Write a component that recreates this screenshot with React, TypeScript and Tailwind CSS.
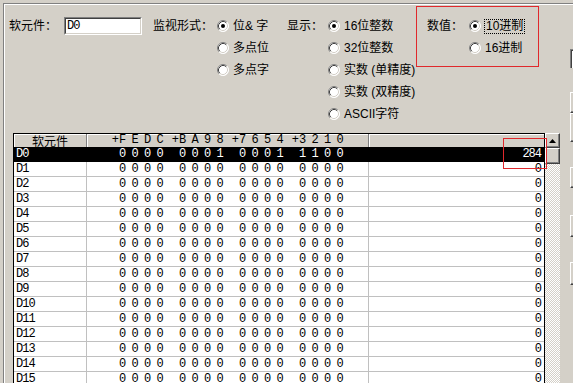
import React from "react"

const ui = 'font-["Liberation_Sans","Noto_Sans_CJK_SC",sans-serif] text-[12px] text-black'
const mono = 'font-["Liberation_Mono","Noto_Sans_CJK_SC",monospace] text-[12px] tracking-[-1px]'
const btn3d =
  "border border-t-white border-l-white border-r-[#404040] border-b-[#404040] bg-[#d4d0c8] shadow-[inset_-1px_-1px_0_#808080]"

function Radio({ checked }: { checked?: boolean }) {
  return (
    <svg width="12" height="12" viewBox="0 0 12 12" className="shrink-0">
      <circle cx="6" cy="6" r="5.5" fill="#fff" />
      <path d="M9.89 2.11 A5.5 5.5 0 0 0 2.11 9.89" stroke="#808080" fill="none" />
      <path d="M2.11 9.89 A5.5 5.5 0 0 0 9.89 2.11" stroke="#ffffff" fill="none" />
      <path d="M9.18 2.82 A4.5 4.5 0 0 0 2.82 9.18" stroke="#404040" fill="none" />
      <path d="M2.82 9.18 A4.5 4.5 0 0 0 9.18 2.82" stroke="#d4d0c8" fill="none" />
      {checked && <circle cx="6" cy="6" r="2" fill="#000" />}
    </svg>
  )
}

function Opt({ label, checked, focus }: { label: string; checked?: boolean; focus?: boolean }) {
  return (
    <div className="flex h-[22px] items-center">
      <Radio checked={checked} />
      {focus ? (
        <span className="ml-[3px] border border-dotted border-black pl-[1px] pr-[1px] leading-[13px]">{label}</span>
      ) : (
        <span className="ml-[4px] leading-[14px] whitespace-nowrap">{label}</span>
      )}
    </div>
  )
}

const rows = Array.from({ length: 16 }, (_, i) => ({
  name: `D${i}`,
  bits: i === 0 ? "0000000100011100" : "0000000000000000",
  value: i === 0 ? "284" : "0",
}))

const headGroups = [
  ["F", "E", "D", "C"],
  ["B", "A", "9", "8"],
  ["7", "6", "5", "4"],
  ["3", "2", "1", "0"],
]

function Bits({ bits }: { bits: string }) {
  return (
    <div className="flex pl-[32px]">
      {[0, 1, 2, 3].map((g) => (
        <div key={g} className="flex w-[60px]">
          {bits
            .slice(g * 4, g * 4 + 4)
            .split("")
            .map((b, k) => (
              <span key={k} className="w-[12.5px]">
                {b}
              </span>
            ))}
        </div>
      ))}
    </div>
  )
}

export default function App() {
  return (
    <div className={`relative h-[383px] w-[573px] overflow-hidden bg-[#d4d0c8] pl-[3px] pt-[3px] ${ui}`}>
      <div className="flex h-full border-l border-t border-[#808080] pl-[1px] pt-[1px] shadow-[inset_1px_1px_0_#fff]">
        {/* main column */}
        <div className="w-[565px] shrink-0">
          {/* controls */}
          <div className="flex h-[128px] items-start pt-[1px]">
            <div className="mt-[9px] ml-[4px] flex h-[22px] w-[55px] items-center">软元件：</div>
            <div className="mt-[11px] h-[18px] w-[78px] border border-t-[#808080] border-l-[#808080] border-r-white border-b-white">
              <div className={`h-full border border-t-[#404040] border-l-[#404040] border-r-[#d4d0c8] border-b-[#d4d0c8] bg-white pl-[1px] leading-[14px] ${mono}`}>
                D0
              </div>
            </div>
            <div className="mt-[9px] ml-[11px] flex h-[22px] w-[64px] items-center">监视形式：</div>
            <div className="mt-[9px] w-[70px]">
              <Opt label="位& 字" checked />
              <Opt label="多点位" />
              <Opt label="多点字" />
            </div>
            <div className="mt-[9px] flex h-[22px] w-[41px] items-center">显示：</div>
            <div className="mt-[9px] w-[88px]">
              <Opt label="16位整数" checked />
              <Opt label="32位整数" />
              <Opt label="实数 (单精度)" />
              <Opt label="实数 (双精度)" />
              <Opt label="ASCII字符" />
            </div>
            <div className="flex h-[61px] w-[123px] items-start border border-[#e0282c] pl-[10px] pt-[8px]">
              <div className="flex h-[22px] w-[42px] items-center">数值：</div>
              <div>
                <Opt label="10进制" checked focus />
                <Opt label="16进制" />
              </div>
            </div>
          </div>

          {/* table */}
          <div className="ml-[8px] flex">
            <div className={`w-[532px] border-l border-r border-t border-black bg-white ${mono}`}>
              <div className="flex h-[13px] bg-[#d4d0c8] leading-[13px]">
                <div className='w-[73px] border-r border-[#808080] text-center font-["Noto_Sans_CJK_SC",sans-serif] tracking-normal shadow-[inset_1px_1px_0_#fff]'>
                  软元件
                </div>
                <div className="flex w-[282px] border-r border-[#808080] pl-[32px] shadow-[inset_1px_1px_0_#fff]">
                  {headGroups.map((g, gi) => (
                    <div key={gi} className="flex w-[60px]">
                      {g.map((c, k) => (
                        <span key={k} className="relative w-[12.5px]">
                          {k === 0 && <span className="absolute right-full top-0 pr-[1px]">+</span>}
                          {c}
                        </span>
                      ))}
                    </div>
                  ))}
                </div>
                <div className="flex-1 shadow-[inset_1px_1px_0_#fff]" />
              </div>
              {rows.map((r, i) =>
                i === 0 ? (
                  <div key={r.name} className="flex h-[15px] border-b border-black bg-black leading-[14px] text-white">
                    <div className="w-[73px] border-r border-black pl-[2px]">{r.name}</div>
                    <div className="w-[282px] border-r border-black">
                      <Bits bits={r.bits} />
                    </div>
                    <div className="flex-1 pr-[3px] text-right">{r.value}</div>
                  </div>
                ) : (
                  <div key={r.name} className="flex h-[15px] border-b border-[#c0c0c0] leading-[14px]">
                    <div className="w-[73px] border-r border-[#c0c0c0] pl-[2px]">{r.name}</div>
                    <div className="w-[282px] border-r border-[#c0c0c0]">
                      <Bits bits={r.bits} />
                    </div>
                    <div className="flex-1 pr-[3px] text-right">{r.value}</div>
                  </div>
                )
              )}
            </div>
            {/* scrollbar */}
            <div className="flex h-[260px] w-[15px] flex-col">
              <div className={`flex h-[15px] items-center justify-center ${btn3d}`}>
                <svg width="7" height="4" viewBox="0 0 7 4">
                  <path d="M3.5 0 L7 4 L0 4 Z" fill="#000" />
                </svg>
              </div>
              <div className={`h-[16px] ${btn3d}`} />
              <div className="flex-1 bg-[repeating-conic-gradient(#ffffff_0_25%,#d4d0c8_0_50%)] bg-[length:2px_2px]" />
            </div>
          </div>
        </div>

        {/* right buttons, cut off by the window edge */}
        <div className="flex w-[20px] shrink-0 flex-col pt-[44px]">
          <div className="h-[19px] border-l border-t border-[#808080] bg-white shadow-[inset_1px_1px_0_#404040]" />
          <div className={`mt-[24px] h-[21px] ${btn3d}`} />
          <div className={`h-[29px] ${btn3d}`} />
          <div className={`mt-[25px] h-[21px] ${btn3d}`} />
          <div className={`mt-[27px] h-[22px] ${btn3d}`} />
          <div className={`mt-[25px] h-[23px] ${btn3d}`} />
        </div>
      </div>

      {/* red annotation around the value */}
      <div className="absolute left-[503px] top-[138px] h-[31px] w-[44px] border border-[#e0282c]" />
    </div>
  )
}
